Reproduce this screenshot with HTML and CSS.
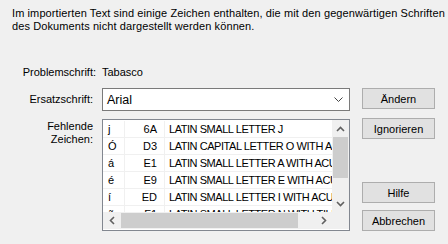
FILE: index.html
```html
<!DOCTYPE html>
<html lang="de">
<head>
<meta charset="utf-8">
<link rel="stylesheet" href="styles.css">
</head>
<body>
<div class="dialog">
  <p class="intro">Im importierten Text sind einige Zeichen enthalten, die mit den gegenwärtigen Schriften des Dokuments nicht dargestellt werden können.</p>
  <div class="form">
    <div class="label label-problem">Problemschrift:</div>
    <div class="value">Tabasco</div>
    <div class="empty"></div>

    <div class="label label-ersatz">Ersatzschrift:</div>
    <div class="combo">
      <span class="combo-text">Arial</span>
      <svg class="combo-arrow" width="9" height="5" viewBox="0 0 9 5"><path d="M0.5 0.5 L4.5 4.5 L8.5 0.5" fill="none" stroke="#444" stroke-width="1"/></svg>
    </div>
    <div class="btn-col-top"><button class="btn">Ändern</button></div>

    <div class="label label-fehl">Fehlende<br>Zeichen:</div>
    <div class="list">
      <div class="list-body">
        <div class="rows">
          <div class="row"><span class="c1">j</span><span class="c2">6A</span><span class="c3">LATIN SMALL LETTER J</span></div>
          <div class="row"><span class="c1">Ó</span><span class="c2">D3</span><span class="c3">LATIN CAPITAL LETTER O WITH ACUTE</span></div>
          <div class="row"><span class="c1">á</span><span class="c2">E1</span><span class="c3">LATIN SMALL LETTER A WITH ACUTE</span></div>
          <div class="row"><span class="c1">é</span><span class="c2">E9</span><span class="c3">LATIN SMALL LETTER E WITH ACUTE</span></div>
          <div class="row"><span class="c1">í</span><span class="c2">ED</span><span class="c3">LATIN SMALL LETTER I WITH ACUTE</span></div>
          <div class="row"><span class="c1">ñ</span><span class="c2">F1</span><span class="c3">LATIN SMALL LETTER N WITH TILDE</span></div>
        </div>
        <div class="vscroll">
          <div class="arrow"><svg width="9" height="6" viewBox="0 0 9 6"><path d="M1 5 L4.5 1.5 L8 5" fill="none" stroke="#606060" stroke-width="1.6"/></svg></div>
          <div class="vtrack"><div class="vthumb"></div></div>
          <div class="arrow"><svg width="9" height="6" viewBox="0 0 9 6"><path d="M1 1 L4.5 4.5 L8 1" fill="none" stroke="#606060" stroke-width="1.6"/></svg></div>
        </div>
      </div>
      <div class="hscroll">
        <div class="arrow"><svg width="6" height="9" viewBox="0 0 6 9"><path d="M5 1 L1.5 4.5 L5 8" fill="none" stroke="#606060" stroke-width="1.6"/></svg></div>
        <div class="htrack"><div class="hthumb"></div></div>
        <div class="arrow"><svg width="6" height="9" viewBox="0 0 6 9"><path d="M1 1 L4.5 4.5 L1 8" fill="none" stroke="#606060" stroke-width="1.6"/></svg></div>
        <div class="corner"></div>
      </div>
    </div>
    <div class="btn-col">
      <button class="btn">Ignorieren</button>
      <button class="btn btn-hilfe">Hilfe</button>
      <button class="btn">Abbrechen</button>
    </div>
  </div>
</div>
</body>
</html>
```

FILE: styles.css
```css
* { box-sizing: border-box; }
html, body {
  margin: 0;
  padding: 0;
  background: #f0f0f0;
}
body {
  width: 448px;
  height: 244px;
  overflow: hidden;
  font-family: "Liberation Sans", Arial, sans-serif;
  font-size: 11px;
  color: #000;
}
.dialog {
  padding: 7px 0 0 12px;
}
.intro {
  margin: 0;
  width: 436px;
  line-height: 13px;
  letter-spacing: 0.1px;
}
.form {
  display: grid;
  grid-template-columns: 84px 248px 73px;
  column-gap: 6px;
  grid-template-rows: 14px 23px 112px;
  row-gap: 0;
  margin-top: 33px;
}
.form > .label-problem, .form > .value { align-self: start; }
.label {
  text-align: right;
  line-height: 13px;
}
.label-problem { margin-right: 0; }
.label-ersatz {
  margin-top: 8px;
  padding-top: 5px;
  margin-right: 3px;
}
.combo {
  margin-top: 8px;
  height: 23px;
  background: #fff;
  border: 1px solid #7a7a7a;
  display: flex;
  align-items: center;
  justify-content: space-between;
  padding: 0 6px 0 4px;
  font-size: 12.5px;
}
.btn-col-top {
  margin-top: 8px;
  padding-left: 6px;
}
.btn {
  display: block;
  width: 73px;
  height: 21px;
  padding: 0;
  margin: 0;
  background: #e1e1e1;
  border: 1px solid #adadad;
  font-family: inherit;
  font-size: 11px;
  color: #000;
}
.label-fehl {
  margin-top: 16px;
  margin-right: 3px;
  padding-top: 1px;
}
.list {
  margin-top: 16px;
  height: 112px;
  border: 1px solid #828790;
  background: #fff;
  display: flex;
  flex-direction: column;
}
.list-body {
  display: flex;
  height: 92px;
}
.rows {
  flex: 1;
  overflow: hidden;
  padding-top: 1px;
}
.row {
  display: flex;
  height: 17px;
  line-height: 16px;
  border-bottom: 1px solid #f0f0f0;
  white-space: nowrap;
}
.c1 {
  width: 22px;
  flex: none;
  padding-left: 5px;
  border-right: 1px solid #f0f0f0;
}
.c2 {
  width: 40px;
  flex: none;
  text-align: right;
  padding-right: 7px;
  border-right: 1px solid #f0f0f0;
}
.c3 {
  padding-left: 4px;
  letter-spacing: -0.45px;
}
.vscroll {
  width: 17px;
  flex: none;
  background: #f0f0f0;
  display: flex;
  flex-direction: column;
}
.arrow {
  width: 17px;
  height: 17px;
  flex: none;
  display: flex;
  align-items: center;
  justify-content: center;
}
.vtrack {
  flex: 1;
}
.vthumb {
  height: 41px;
  background: #cdcdcd;
  margin: 0 1px;
}
.hscroll {
  display: flex;
  height: 17px;
  background: #f0f0f0;
}
.htrack {
  flex: 1;
  display: flex;
  align-items: stretch;
}
.hthumb {
  width: 177px;
  margin: 1px 0 1px 1px;
  background: #cdcdcd;
}
.corner {
  width: 17px;
  flex: none;
  background: #f0f0f0;
}
.btn-col {
  margin-top: 15px;
  padding-left: 6px;
  height: 113px;
  display: flex;
  flex-direction: column;
}
.btn-hilfe {
  margin-top: auto;
  margin-bottom: 7px;
}
```
